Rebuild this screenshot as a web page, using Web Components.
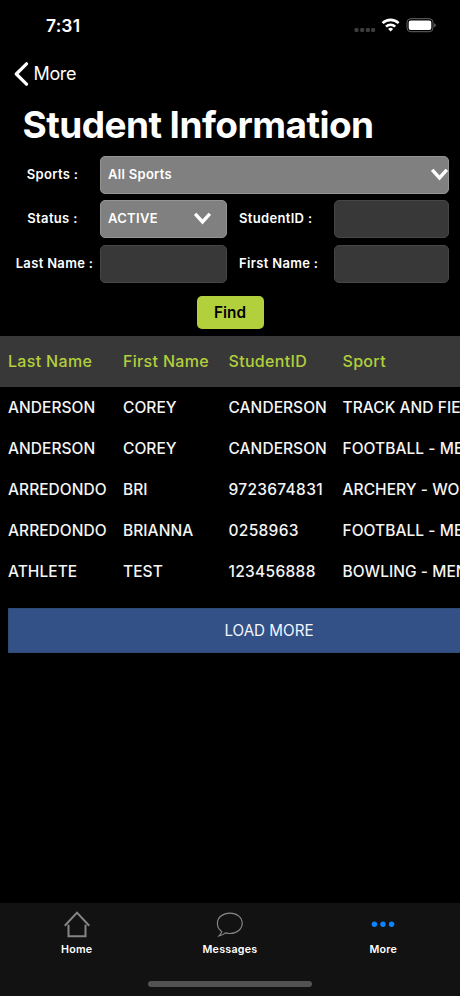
<!DOCTYPE html>
<html lang="en">
<head>
<meta charset="utf-8">
<meta name="viewport" content="width=device-width, initial-scale=1">
<title>Student Information</title>
<style>
  html,body{margin:0;height:100%;background:#000;overflow:hidden}
  body{color:#fff;font-family:Inter,"Liberation Sans",sans-serif;font-kerning:normal}
</style>
</head>
<body>
<student-screen></student-screen>
<script>
(() => {
  const define = (name, html) => customElements.define(name, class extends HTMLElement {
    connectedCallback() {
      if (this.shadowRoot) return;
      const root = this.attachShadow({mode: 'open'});
      root.innerHTML = typeof html === 'function' ? html(this) : html;
    }
  });

  define('status-bar', `
    <style>
      :host{display:flex;height:52px;box-sizing:border-box;padding:0 24px 0 46px;align-items:center;justify-content:space-between}
      time{font-size:17.5px;font-weight:600;letter-spacing:.15px;line-height:20px}
      svg{display:block}
    </style>
    <time>7:31</time>
    <svg width="82" height="20" viewBox="0 0 82 20">
      <g fill="#3d3d3d"><rect x=".5" y="12" width="4" height="4" rx="1.3"/><rect x="6.2" y="12" width="4" height="4" rx="1.3"/><rect x="11.9" y="12" width="4" height="4" rx="1.3"/><rect x="17.1" y="12" width="4" height="4" rx="1.3"/></g>
      <g fill="none" stroke="#fff" stroke-width="2.6"><path d="M28.6 7.2a11.3 11.3 0 0 1 16 0"/><path d="M32 10.7a6.5 6.5 0 0 1 9.2 0"/></g>
      <path fill="#fff" d="M34.1 13a3.6 3.6 0 0 1 5 0l-2.500 2.600z"/>
      <rect x="53" y="2.7" width="26" height="13" rx="3.8" fill="none" stroke="#666"/>
      <rect x="54.7" y="4.400" width="22.600" height="9.600" rx="2" fill="#fff"/>
      <path fill="#666" d="M80.2 7.200v4q1.600-.6 1.600-2t-1.600-2z"/>
    </svg>`);

  define('nav-back', `
    <style>
      :host{display:flex;height:44px;padding-left:14px;align-items:center;gap:4.5px;font-size:18px;line-height:24px;letter-spacing:-.35px}
      svg{display:block;fill:none;stroke:#fff;stroke-width:3.2;stroke-linecap:round;stroke-linejoin:round}
    </style>
    <svg width="15" height="24" viewBox="0 0 15 24"><path d="M12.5 1.8 2.3 12l10.2 10.2"/></svg>
    <span><slot></slot></span>`);

  define('field-label', `
    <style>
      :host{display:flex;justify-content:center;padding:0 2px 2px 0;font-size:13px;font-weight:600;letter-spacing:.33px;line-height:16px;white-space:pre}
      :host([start]){justify-content:flex-start;padding-left:12.5px}
      :host([long]){padding:0 0 2px 2px}
    </style><slot></slot>`);

  define('text-field', `
    <style>:host{display:block;height:38px;box-sizing:border-box;border:1px solid #464646;border-radius:5px;background:#383838}</style>`);

  define('select-field', `
    <style>
      :host{display:flex;height:38px;box-sizing:border-box;padding:0 15px 2px 7px;align-items:center;justify-content:space-between;border:1px solid #949494;border-radius:5px;background:#808080;font-size:13px;font-weight:600;line-height:16px;letter-spacing:.3px;overflow:hidden}
      :host([edge]){padding-right:0}
      svg{display:block;flex:none;margin-top:1px;fill:none;stroke:#fff;stroke-width:3.4}
    </style>
    <span><slot></slot></span>
    <svg width="17" height="13" viewBox="0 0 17 13"><path d="m1.2 1.8 7.3 8.2 7.3-8.2"/></svg>`);

  define('find-button', `
    <style>
      :host{display:block}
      button{display:block;width:67px;height:33px;margin:0 auto;padding:1px 0 0;border:0;border-radius:5px;background:#b2cf3c;color:#000;font:600 15.3px/20px Inter,sans-serif}
    </style>
    <button><slot></slot></button>`);

  // one row of the results grid, four cells separated by "|"
  define('result-row', el => `
    <style>
      :host{display:grid;grid-template-columns:115px 105.5px 114px 1fr;height:41px;padding-left:8px;align-items:center;color:#f5f5f5;font-size:15.5px;font-weight:500;letter-spacing:.05px;white-space:nowrap}
      :host([head]){height:51px;background:#383838;color:#b2cf3c;font-size:16px;letter-spacing:.32px}
      .number{letter-spacing:.3px}
    </style>
    ${el.getAttribute('cells').split('|').map(c => `<span${/^\d/.test(c) ? ' class="number"' : ''}>${c}</span>`).join('')}`);

  define('load-more', `
    <style>
      :host{display:flex;width:523px;height:45px;margin:16px 0 0 7.5px;box-sizing:border-box;align-items:center;justify-content:center;border:1px solid #2d4b73;background:#335087;color:#f1f5fc;font-size:15.2px}
    </style><slot></slot>`);

  define('tab-item', `
    <style>
      :host{display:flex;flex:1;flex-direction:column;align-items:center;font-size:10.7px;font-weight:600;letter-spacing:.25px;line-height:14px}
      .icon{display:flex;height:28px;margin-bottom:5px;align-items:center}
      ::slotted(svg){display:block;fill:none;stroke:#858585}
    </style>
    <span class="icon"><slot name="icon"></slot></span><span><slot></slot></span>`);

  define('tab-bar', `
    <style>
      :host{display:flex;flex-direction:column;height:93px;box-sizing:border-box;padding-top:7px;background:#121212}
      .tabs{display:flex}
      .handle{width:164px;height:6px;margin:auto auto 9px;border-radius:3px;background:#525252}
    </style>
    <div class="tabs"><slot></slot></div><div class="handle"></div>`);

  define('student-screen', `
    <style>
      :host{display:flex;flex-direction:column;height:996px;overflow:hidden}
      h1{height:55.5px;margin:4px 0 0 22.5px;font-size:37px;font-weight:700;line-height:50px;letter-spacing:-.55px;white-space:nowrap}
      form{display:grid;grid-template-columns:93px 126.5px 107px 115px;grid-auto-rows:38px;row-gap:6.5px;padding-left:7px;align-items:center}
      .wide{grid-column:2/5}
      find-button{margin:13px 0 7px}
      main{flex:1;overflow:hidden}
    </style>
    <status-bar></status-bar>
    <nav-back>More</nav-back>
    <h1>Student Information</h1>
    <form>
      <field-label>Sports :</field-label><select-field class="wide" edge>All Sports</select-field>
      <field-label>Status :</field-label><select-field>ACTIVE</select-field>
      <field-label start>StudentID :</field-label><text-field></text-field>
      <field-label long>Last Name :</field-label><text-field></text-field>
      <field-label start>First Name :</field-label><text-field></text-field>
    </form>
    <find-button>Find</find-button>
    <main>
      <result-row head cells="Last Name|First Name|StudentID|Sport"></result-row>
      <result-row cells="ANDERSON|COREY|CANDERSON|TRACK AND FIELD"></result-row>
      <result-row cells="ANDERSON|COREY|CANDERSON|FOOTBALL - MEN"></result-row>
      <result-row cells="ARREDONDO|BRI|9723674831|ARCHERY - WOMEN"></result-row>
      <result-row cells="ARREDONDO|BRIANNA|0258963|FOOTBALL - MEN"></result-row>
      <result-row cells="ATHLETE|TEST|123456888|BOWLING - MEN"></result-row>
      <load-more>LOAD MORE</load-more>
    </main>
    <tab-bar>
      <tab-item><svg slot="icon" width="28" height="28" viewBox="0 0 28 28" stroke-width="2"><path d="M1.800 15.800 14 2.600l12.200 13.200M5.500 14.800v11.500h17V14.800"/></svg>Home</tab-item>
      <tab-item><svg slot="icon" width="28" height="28" viewBox="0 0 28 28" stroke-width="1.2"><path d="M14 3.2C6.800 3.200 1.400 7.400 1.400 13.300c0 3.500 1.700 6.500 4.300 8.300-.2 1.400-1 2.800-2.700 4.300 2.700-.3 4.800-1.500 6.300-3 1.500.4 3 .6 4.700.6 7.200 0 12.200-4.500 12.200-10.200S21.200 3.200 14 3.200z"/></svg>Messages</tab-item>
      <tab-item><svg slot="icon" width="28" height="28" viewBox="0 0 28 28"><g fill="#0a84ff" stroke="none"><circle cx="5.4" cy="14.3" r="2.7"/><circle cx="14" cy="14.3" r="2.7"/><circle cx="22.6" cy="14.3" r="2.7"/></g></svg>More</tab-item>
    </tab-bar>`);
})();
</script>
</body>
</html>
